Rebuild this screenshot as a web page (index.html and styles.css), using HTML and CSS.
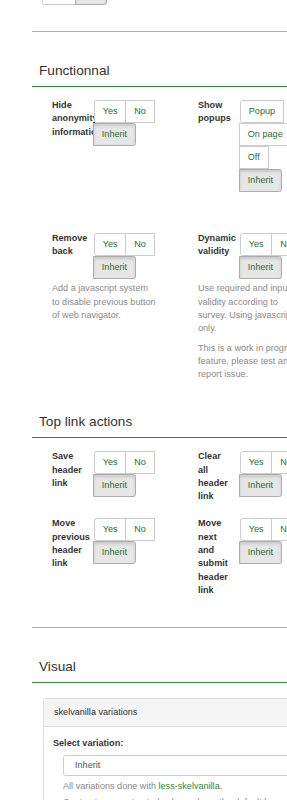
FILE: index.html
```html
<!DOCTYPE html>
<html>
  <head>
    <meta charset="utf-8"/>
    <title>Theme options</title>
    <link rel="stylesheet" href="styles.css">
  </head>
  <body>
    <div class="page">
      <div class="btn-group top-group">
        <span class="btn stub yes"></span><span class="btn stub no active"></span>
      </div>
      <hr class="sep" />

      <h2 class="legend">Functionnal</h2>
      <div class="row first">
        <div class="setting">
          <div class="line">
            <div class="label">Hide anonymity information</div>
            <div class="btn-group">
              <span class="btn">Yes</span><span class="btn">No</span><span class="btn active">Inherit</span>
            </div>
          </div>
        </div>
        <div class="setting">
          <div class="line">
            <div class="label">Show popups</div>
            <div class="btn-group">
              <span class="btn">Popup</span><span class="btn">On page</span><span class="btn">Off</span><span class="btn active">Inherit</span>
            </div>
          </div>
        </div>
      </div>
      <div class="row">
        <div class="setting">
          <div class="line">
            <div class="label">Remove back</div>
            <div class="btn-group">
              <span class="btn">Yes</span><span class="btn">No</span><span class="btn active">Inherit</span>
            </div>
          </div>
          <p class="help">Add a javascript system to disable previous button of web navigator.</p>
        </div>
        <div class="setting">
          <div class="line">
            <div class="label">Dynamic validity</div>
            <div class="btn-group">
              <span class="btn">Yes</span><span class="btn">No</span><span class="btn active">Inherit</span>
            </div>
          </div>
          <p class="help">Use required and input validity according to survey. Using javascript only.</p>
          <p class="help">This is a work in progress feature, please test and report issue.</p>
        </div>
      </div>

      <h2 class="legend follow">Top link actions</h2>
      <div class="row">
        <div class="setting">
          <div class="line">
            <div class="label">Save header link</div>
            <div class="btn-group">
              <span class="btn">Yes</span><span class="btn">No</span><span class="btn active">Inherit</span>
            </div>
          </div>
        </div>
        <div class="setting">
          <div class="line">
            <div class="label">Clear all header link</div>
            <div class="btn-group">
              <span class="btn">Yes</span><span class="btn">No</span><span class="btn active">Inherit</span>
            </div>
          </div>
        </div>
      </div>
      <div class="row">
        <div class="setting">
          <div class="line">
            <div class="label">Move previous header link</div>
            <div class="btn-group">
              <span class="btn">Yes</span><span class="btn">No</span><span class="btn active">Inherit</span>
            </div>
          </div>
        </div>
        <div class="setting">
          <div class="line">
            <div class="label">Move next and submit header link</div>
            <div class="btn-group">
              <span class="btn">Yes</span><span class="btn">No</span><span class="btn active">Inherit</span>
            </div>
          </div>
        </div>
      </div>
      <hr class="sep after" />

      <h2 class="legend">Visual</h2>
      <div class="panel">
        <div class="panel-heading">skelvanilla variations</div>
        <div class="panel-body">
          <div class="field-label">Select variation:</div>
          <div class="select">Inherit</div>
          <p class="help wide">All variations done with <a href="#">less-skelvanilla</a>.</p>
          <p class="help wide">Contrast use contrasted color and use the default browser font for all text.</p>
        </div>
      </div>
    </div>
  </body>
</html>
```

FILE: styles.css
```css
body {
  margin: 0;
  padding: 0;
  overflow: hidden;
  background: white;
  font-family: "Liberation Sans", Arial, sans-serif;
  font-size: 9.1px;
  color: #333333;
}

.page {
  width: 420px;
}

/* buttons */

.btn-group {
  display: flex;
  flex-wrap: wrap;
  width: 66px;
}

.btn {
  display: block;
  padding: 4px 7.8px;
  line-height: 13px;
  border: 1px solid #cccccc;
  background: white;
  color: #2e6b30;
  white-space: nowrap;
}

.btn + .btn {
  margin-left: -1px;
}

.btn:first-child {
  border-radius: 2.6px 0 0 2.6px;
}

.btn:last-child {
  border-radius: 0 2.6px 2.6px 0;
}

.btn.active {
  background: #e6e6e6;
  border-color: #adadad;
  box-shadow: inset 0 2px 3px rgba(0, 0, 0, 0.125);
}

.top-group {
  margin: -18px 0 0 42px;
  width: 100px;
}

.btn.stub {
  height: 13px;
  padding: 4px 0;
}

.btn.stub.yes {
  width: 32px;
}

.btn.stub.no {
  width: 30px;
}

/* separators and headings */

hr.sep {
  margin: 26px 0 0 32px;
  border: 0;
  border-top: 1px solid #92c392;
}

hr.sep.after {
  margin-top: 30px;
}

.legend {
  margin: 29px 0 0 32px;
  padding: 0 0 6px 7px;
  font-size: 13.65px;
  font-weight: normal;
  line-height: 19px;
  color: #333333;
  border-bottom: 1px solid #328637;
}

.legend.follow {
  margin-top: 24.5px;
}

/* settings rows */

.row {
  display: flex;
  margin: 15px 0 0 32px;
}

.row.first {
  margin-top: 14px;
  margin-bottom: 41px;
}

.legend + .row {
  margin-top: 13px;
}

.setting {
  width: 126px;
  padding-left: 20px;
  flex: none;
}

.line {
  display: flex;
  align-items: flex-start;
}

.label {
  width: 32px;
  padding-right: 10px;
  margin-top: -1px;
  font-weight: bold;
  line-height: 13.3px;
  flex: none;
}

.help {
  width: 105px;
  margin: 3.3px 0 6.5px 0;
  line-height: 13.2px;
  color: #8a8a8a;
}

.help + .help {
  margin-top: 3.3px;
}

/* panel */

.panel {
  margin: 15px 0 0 43px;
  border: 1px solid #dddddd;
  border-radius: 2.6px;
}

.panel-heading {
  padding: 7px 10px;
  line-height: 13px;
  background: #f5f5f5;
  border-bottom: 1px solid #dddddd;
}

.panel-body {
  padding: 10px 9px;
}

.field-label {
  font-weight: bold;
  line-height: 13px;
}

.select {
  margin: 5px 0 0 10px;
  padding: 3px 11px;
  line-height: 13px;
  color: #555555;
  border: 1px solid #cccccc;
  border-radius: 2.6px;
}

.help.wide {
  width: auto;
  margin: 3.5px 0 0 10px;
  line-height: 12.7px;
}

.help a {
  color: #328637;
  text-decoration: none;
}
```
